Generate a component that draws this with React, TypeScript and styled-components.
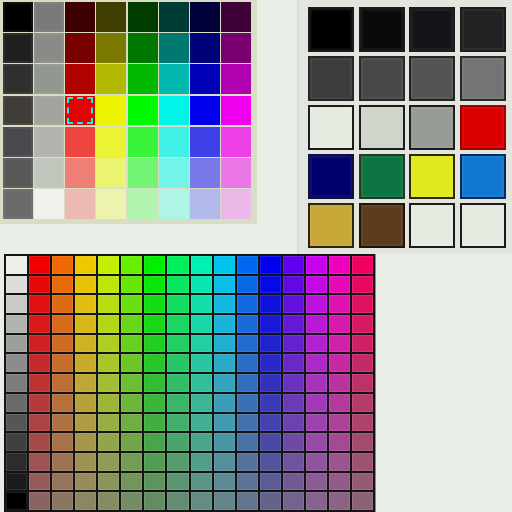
import React from "react";
import styled, { createGlobalStyle, css } from "styled-components";

const Global = createGlobalStyle`
  html, body { margin: 0; padding: 0; background: #e9eee6; font-family: "Liberation Sans", Arial, sans-serif; }
  #root { width: 512px; height: 512px; overflow: hidden; }
`;

const Page = styled.div`
  width: 512px;
  height: 512px;
  display: flex;
  flex-direction: column;
  background: #e9eee6;
`;

const TopRow = styled.div`
  display: flex;
  align-items: flex-start;
  justify-content: space-between;
  height: 254px;
`;

const BasicPanel = styled.div`
  width: 257px;
  height: 224px;
  box-sizing: border-box;
  padding: 2px 6px 5px 3px;
  background: #d8dec6;
`;

const BasicGrid = styled.div`
  display: grid;
  grid-template-columns: repeat(8, 1fr);
  grid-template-rows: repeat(7, 1fr);
  gap: 1.2px;
  width: 248px;
  height: 217px;
`;

const BasicCell = styled.div<{ $c: string; $sel?: boolean; $frame?: boolean }>`
  position: relative;
  background: ${(p) => p.$c};
  ${(p) =>
    p.$frame &&
    css`
      box-shadow: inset 0 0 0 2px rgba(255, 255, 255, 0.06);
    `}
  ${(p) =>
    p.$sel &&
    css`
      &::after {
        content: "";
        position: absolute;
        inset: 1px 2px 1px 2px;
        border: 2px dashed #16f0ea;
      }
    `}
`;

const CustomPanel = styled.div`
  width: 215px;
  height: 254px;
  box-sizing: border-box;
  padding: 7px 7px 0 9px;
  background: #e2e6df;
  border-left: 2px solid #d8dbd6;
`;

const CustomGrid = styled.div`
  display: grid;
  grid-template-columns: repeat(4, 46px);
  grid-template-rows: repeat(5, 45px);
  column-gap: 4.6px;
  row-gap: 4px;
`;

const CustomCell = styled.div<{ $c: string; $b?: string }>`
  box-sizing: border-box;
  background: ${(p) => p.$c};
  border: 2px solid ${(p) => p.$b ?? "#1c1c1c"};
  box-shadow: inset 0 0 0 2px rgba(255, 255, 255, 0.05);
`;

const Spectrum = styled.div`
  margin-left: 4px;
  width: 372px;
  height: 258px;
  box-sizing: border-box;
  padding: 2px;
  display: grid;
  grid-template-columns: repeat(16, 1fr);
  grid-template-rows: repeat(13, 1fr);
  gap: 2px;
  background: #141414;
  border-right: 1px solid #8a8a8a;
`;

const SpecCell = styled.div<{ $c: string }>`
  background: ${(p) => p.$c};
  box-shadow: inset 0 0 0 1px rgba(255, 255, 255, 0.1);
`;

const basic: string[][] = [
  ["#000000", "#7a7a7a", "#3e0000", "#403e00", "#003c00", "#003c36", "#00003a", "#3e0036"],
  ["#202020", "#8a8a86", "#780000", "#7a7a00", "#007800", "#007a70", "#000078", "#780070"],
  ["#2e302e", "#909890", "#b00000", "#b0b800", "#00b800", "#00b8b0", "#0000b8", "#b000b0"],
  ["#403c38", "#a0a49c", "#e80000", "#eef400", "#00fa00", "#00f4e8", "#0000ee", "#ee00ee"],
  ["#4a484c", "#b0b4ac", "#ee4440", "#eaf434", "#3af43a", "#40f0e4", "#4040e8", "#ee40e8"],
  ["#585858", "#c0c6bc", "#ee8078", "#eaf470", "#74f474", "#74f4e8", "#7878e8", "#ec78e8"],
  ["#6a6a6a", "#eef2ea", "#ecbab0", "#eef4b0", "#b0f4b0", "#b0f4e6", "#b0b8ec", "#ecb8e8"],
];

const custom: { c: string; b?: string }[] = [
  { c: "#000000" },
  { c: "#0a0a0a" },
  { c: "#141418" },
  { c: "#222222" },
  { c: "#3c3c3c", b: "#262626" },
  { c: "#484848", b: "#2a2a2a" },
  { c: "#545454", b: "#242424" },
  { c: "#747474", b: "#2a2a2a" },
  { c: "#e4ebe0" },
  { c: "#cfd5cb" },
  { c: "#969c94" },
  { c: "#dc0000", b: "#a00000" },
  { c: "#00006c", b: "#10103a" },
  { c: "#0c7440", b: "#283828" },
  { c: "#e0e820", b: "#2a2a10" },
  { c: "#1078d0", b: "#0c2a58" },
  { c: "#c8a838", b: "#2a2410" },
  { c: "#5c3c1c", b: "#201408" },
  { c: "#e4ebe0" },
  { c: "#e4ebe0" },
];

const grays = [
  "#eef0ec", "#dcdedb", "#c8cac6", "#b0b4ae", "#9ca09a", "#8c8c8c", "#7c7c7c",
  "#6a6a6a", "#565656", "#404040", "#2c2c2c", "#1c1a1c", "#000000",
];

const hues = [0, 26, 50, 72, 95, 120, 143, 165, 191, 214, 240, 264, 290, 313, 336];

function hsl(h: number, s: number, l: number): string {
  return `hsl(${h}, ${s}%, ${l}%)`;
}

export default function App() {
  const rows = Array.from({ length: 13 }, (_, r) => r);
  return (
    <Page>
      <Global />
      <TopRow>
        <BasicPanel>
          <BasicGrid>
            {basic.flatMap((row, r) =>
              row.map((c, i) => (
                <BasicCell key={`${r}-${i}`} $c={c} $sel={r === 3 && i === 2} $frame={i <= 1} />
              ))
            )}
          </BasicGrid>
        </BasicPanel>
        <CustomPanel>
          <CustomGrid>
            {custom.map((cc, i) => (
              <CustomCell key={i} $c={cc.c} $b={cc.b} />
            ))}
          </CustomGrid>
        </CustomPanel>
      </TopRow>
      <Spectrum>
        {rows.flatMap((r) => [
          <SpecCell key={`g${r}`} $c={grays[r]} />,
          ...hues.map((h) => (
            <SpecCell key={`${r}-${h}`} $c={hsl(h, 100 - r * 6.9, 47)} />
          )),
        ])}
      </Spectrum>
    </Page>
  );
}
